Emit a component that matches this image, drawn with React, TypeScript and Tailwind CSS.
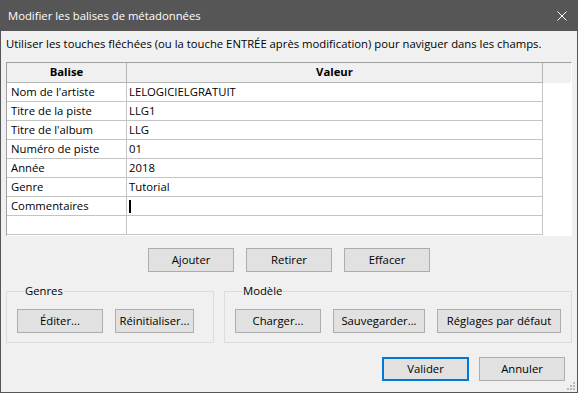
import React from "react";

const FONT = { fontFamily: '"Open Sans", "Liberation Sans", Arial, sans-serif' };

type Row = [string, string];

const rows: Row[] = [
    ["Nom de l'artiste", "LELOGICIELGRATUIT"],
    ["Titre de la piste", "LLG1"],
    ["Titre de l'album", "LLG"],
    ["Numéro de piste", "01"],
    ["Année", "2018"],
    ["Genre", "Tutorial"],
    ["Commentaires", ""],
    ["", ""],
];

function Btn({ label, w, primary }: { label: string; w: string; primary?: boolean }) {
    return (
        <button
            className={`${w} h-[24px] bg-[#e1e1e1] text-[11.3px] text-black leading-none flex items-center justify-center ${
                primary ? "border-2 border-[#0078d7]" : "border border-[#adadad]"
            }`}
        >
            {label}
        </button>
    );
}

function GroupBox({ title, w, children }: { title: string; w: string; children: React.ReactNode }) {
    return (
        <fieldset className={`${w} border border-[#dcdcdc] px-[10px] pt-[10px] pb-[9px]`}>
            <legend className="ml-[7px] px-[1px] text-[11.3px] leading-[16px] text-black">{title}</legend>
            <div className="flex gap-[12px]">{children}</div>
        </fieldset>
    );
}

export default function App() {
    return (
        <div
            className="relative w-[578px] h-[393px] bg-[#f0f0f0] border border-[#565656] flex flex-col text-black"
            style={FONT}
        >
            <div className="h-[30px] bg-[#565656] flex items-center justify-between pl-[7px] pr-[10px]">
                <span className="text-white text-[11.3px] leading-none">Modifier les balises de métadonnées</span>
                <svg width="10" height="10" viewBox="0 0 10 10" className="text-white">
                    <path d="M0.5 0.5 L9.5 9.5 M9.5 0.5 L0.5 9.5" stroke="currentColor" strokeWidth="1" />
                </svg>
            </div>

            <p className="pl-[5px] pt-[5px] text-[11.3px] leading-[16px]">
                Utiliser les touches fléchées (ou la touche ENTRÉE après modification) pour naviguer dans les champs.
            </p>

            <div className="mx-[5px] mt-[10px] border border-t-[#a0a0a0] border-l-[#a0a0a0] border-r-white border-b-white flex">
                <div className="w-[536px] flex flex-col bg-white">
                    <div className="flex h-[20px] bg-[#f0f0f0] text-[11.3px] font-bold">
                        <div className="w-[120px] border-r border-b border-[#b4b4b4] flex items-center justify-center">
                            Balise
                        </div>
                        <div className="w-[416px] border-r border-b border-[#b4b4b4] flex items-center justify-center">
                            Valeur
                        </div>
                    </div>
                    {rows.map(([tag, value], i) => (
                        <div key={i} className="flex h-[19px] text-[11.3px]">
                            <div className="w-[120px] border-r border-b border-[#c4c4c4] pl-[4px] leading-[18px]">
                                {tag}
                            </div>
                            <div className="w-[416px] border-r border-b border-[#c4c4c4] pl-[2px] leading-[18px] flex items-center">
                                {tag === "Commentaires" ? (
                                    <span className="w-[2px] h-[13px] bg-black" />
                                ) : (
                                    value
                                )}
                            </div>
                        </div>
                    ))}
                </div>
                <div className="flex-1 flex flex-col">
                    <div className="h-[20px] bg-[#f0f0f0]" />
                    <div className="flex-1 bg-white" />
                </div>
            </div>

            <div className="mt-[12px] flex justify-center gap-[12px]">
                <Btn label="Ajouter" w="w-[86px]" />
                <Btn label="Retirer" w="w-[86px]" />
                <Btn label="Effacer" w="w-[86px]" />
            </div>

            <div className="mx-[5px] mt-[11px] flex gap-[10px]">
                <GroupBox title="Genres" w="w-[208px]">
                    <Btn label="Éditer..." w="w-[86px]" />
                    <Btn label="Réinitialiser..." w="w-[79px]" />
                </GroupBox>
                <GroupBox title="Modèle" w="w-[348px]">
                    <Btn label="Charger..." w="w-[86px]" />
                    <Btn label="Sauvegarder..." w="w-[92px]" />
                    <Btn label="Réglages par défaut" w="w-[124px]" />
                </GroupBox>
            </div>

            <div className="mt-[14px] flex justify-end gap-[10px] pr-[12px]">
                <Btn label="Valider" w="w-[87px]" primary />
                <Btn label="Annuler" w="w-[86px]" />
            </div>

            <svg width="10" height="10" viewBox="0 0 10 10" className="absolute right-[1px] bottom-[1px]">
                <g fill="#b8b8b8">
                    <rect x="7" y="1" width="2" height="2" />
                    <rect x="4" y="4" width="2" height="2" />
                    <rect x="7" y="4" width="2" height="2" />
                    <rect x="1" y="7" width="2" height="2" />
                    <rect x="4" y="7" width="2" height="2" />
                    <rect x="7" y="7" width="2" height="2" />
                </g>
            </svg>
        </div>
    );
}
